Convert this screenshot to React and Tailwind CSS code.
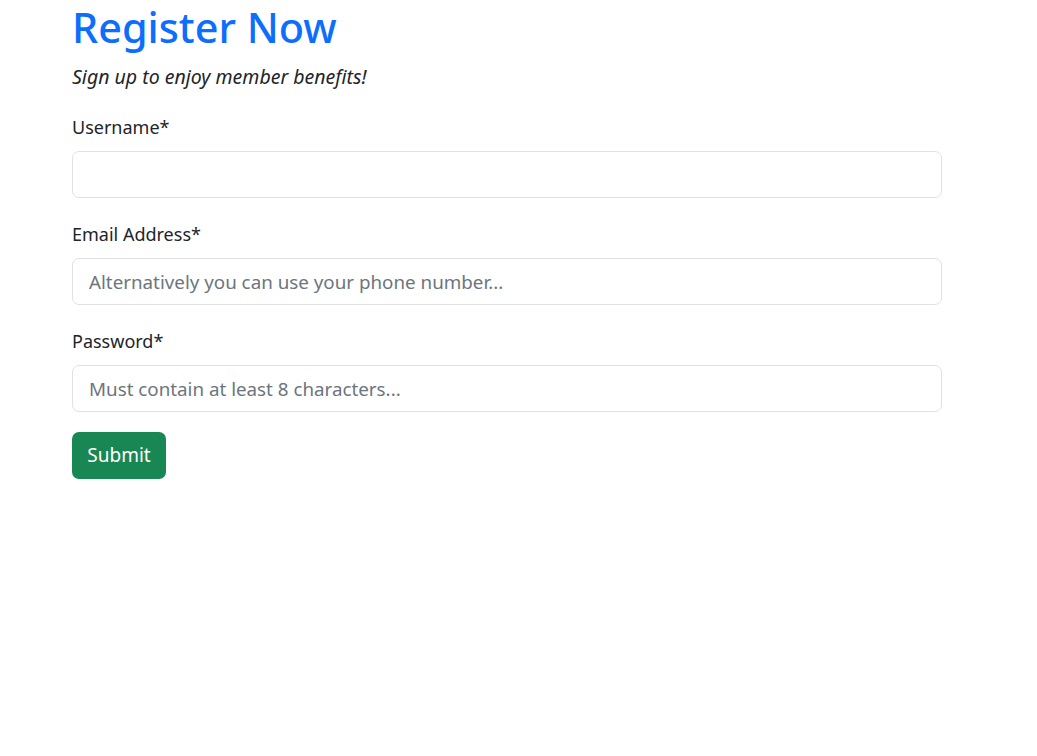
import React from 'react';

const Field = ({ label, placeholder, type = 'text', last }) => (
  <div className={last ? 'mb-[20px]' : 'mb-[24px]'}>
    <label className="block text-[18px] leading-[24px] text-[#212529] mb-[12px]">{label}</label>
    <input
      type={type}
      placeholder={placeholder}
      className="block w-full h-[47px] px-[16px] text-[18.8px] text-[#212529] placeholder:text-[#6c757d] border border-[#dee2e6] rounded-[7px] bg-white outline-none"
    />
  </div>
);

export default function App() {
  return (
    <div className="min-h-screen bg-white" style={{ fontFamily: '"Noto Sans", "Open Sans", sans-serif' }}>
      <div className="pl-[72px] w-[942px]">
        <h1 className="text-[41.4px] leading-[55px] font-medium text-[#0d6efd]">Register Now</h1>
        <p className="italic text-[19.5px] leading-[24px] text-[#212529] mt-[10px] mb-[26px]">Sign up to enjoy member benefits!</p>
        <form>
          <Field label="Username*" />
          <Field label="Email Address*" placeholder="Alternatively you can use your phone number..." type="email" />
          <Field label="Password*" placeholder="Must contain at least 8 characters..." type="password" last />
          <button type="button" className="h-[47px] w-[94px] text-[19px] text-white bg-[#198754] rounded-[7px]">Submit</button>
        </form>
      </div>
    </div>
  );
}
